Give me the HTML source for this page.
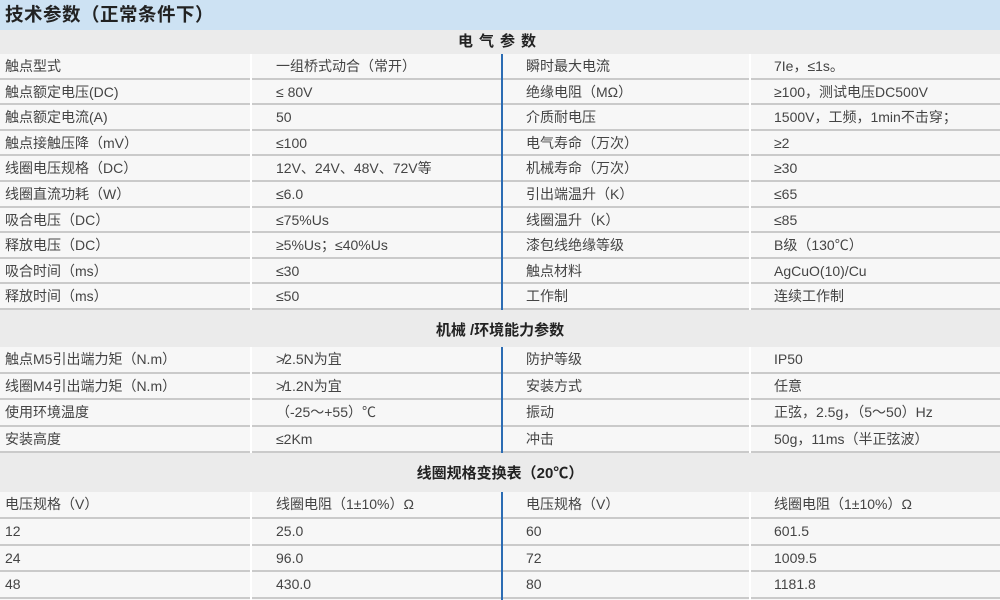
<!DOCTYPE html>
<html><head><meta charset="utf-8"><style>
*{margin:0;padding:0;box-sizing:border-box}
body{width:1000px;height:600px;overflow:hidden;background:#f7f7f7;font-family:"Liberation Sans","Noto Sans CJK SC",sans-serif;color:#444;font-size:14px;position:relative}
.title{position:absolute;left:0;top:0;width:1000px;height:30px;background:#cde2f3;font-weight:bold;font-size:18.5px;color:#222;padding-left:5px;line-height:30px;letter-spacing:0.5px}
.hd{position:absolute;left:0;width:1000px;background:#ebebeb;text-align:center;font-size:15px;color:#222;font-weight:bold}
.row{position:absolute;left:0;width:1000px;border-bottom:2px solid #cacaca}
.row span{position:absolute;top:0}
.c1{left:5px}.c2{left:276px}.c3{left:526px}.c4{left:774px}
.vl{position:absolute;width:2px;background:#fff}
.bl{position:absolute;width:2px;background:#2b6cb3;left:501px}
</style></head><body>
<div class="title">技术参数（正常条件下）</div>
<div class="hd" style="top:30px;height:24px;line-height:24px;letter-spacing:6px">电气参数</div>
<div class="hd" style="top:310px;height:37px;line-height:42px">机械 /环境能力参数</div>
<div class="hd" style="top:453px;height:39px;line-height:42px">线圈规格变换表（20℃）</div>
<script>
function rows(top,h,data){var s='';data.forEach(function(r,i){s+='<div class="row" style="top:'+(top+i*h)+'px;height:'+h+'px;line-height:'+(h-1)+'px"><span class="c1">'+r[0]+'</span><span class="c2">'+r[1]+'</span><span class="c3">'+r[2]+'</span><span class="c4">'+r[3]+'</span></div>'});document.write(s)}
rows(54,25.6,[
['触点型式','一组桥式动合（常开）','瞬时最大电流','7Ie，≤1s。'],
['触点额定电压(DC)','≤ 80V','绝缘电阻（MΩ）','≥100，测试电压DC500V'],
['触点额定电流(A)','50','介质耐电压','1500V，工频，1min不击穿；'],
['触点接触压降（mV）','≤100','电气寿命（万次）','≥2'],
['线圈电压规格（DC）','12V、24V、48V、72V等','机械寿命（万次）','≥30'],
['线圈直流功耗（W）','≤6.0','引出端温升（K）','≤65'],
['吸合电压（DC）','≤75%Us','线圈温升（K）','≤85'],
['释放电压（DC）','≥5%Us；≤40%Us','漆包线绝缘等级','B级（130℃）'],
['吸合时间（ms）','≤30','触点材料','AgCuO(10)/Cu'],
['释放时间（ms）','≤50','工作制','连续工作制']]);
rows(347,26.5,[
['触点M5引出端力矩（N.m）','≯2.5N为宜','防护等级','IP50'],
['线圈M4引出端力矩（N.m）','≯1.2N为宜','安装方式','任意'],
['使用环境温度','（-25～+55）℃','振动','正弦，2.5g，（5～50）Hz'],
['安装高度','≤2Km','冲击','50g，11ms（半正弦波）']]);
rows(492,26.8,[
['电压规格（V）','线圈电阻（1±10%）Ω','电压规格（V）','线圈电阻（1±10%）Ω'],
['12','25.0','60','601.5'],
['24','96.0','72','1009.5'],
['48','430.0','80','1181.8']]);
</script>
<div class="vl" style="left:250px;top:54px;height:256px"></div>
<div class="vl" style="left:749px;top:54px;height:256px"></div>
<div class="bl" style="top:54px;height:256px"></div>
<div class="vl" style="left:250px;top:347px;height:106px"></div>
<div class="vl" style="left:749px;top:347px;height:106px"></div>
<div class="bl" style="top:347px;height:106px"></div>
<div class="vl" style="left:250px;top:492px;height:108px"></div>
<div class="vl" style="left:749px;top:492px;height:108px"></div>
<div class="bl" style="top:492px;height:108px"></div>
</body></html>
